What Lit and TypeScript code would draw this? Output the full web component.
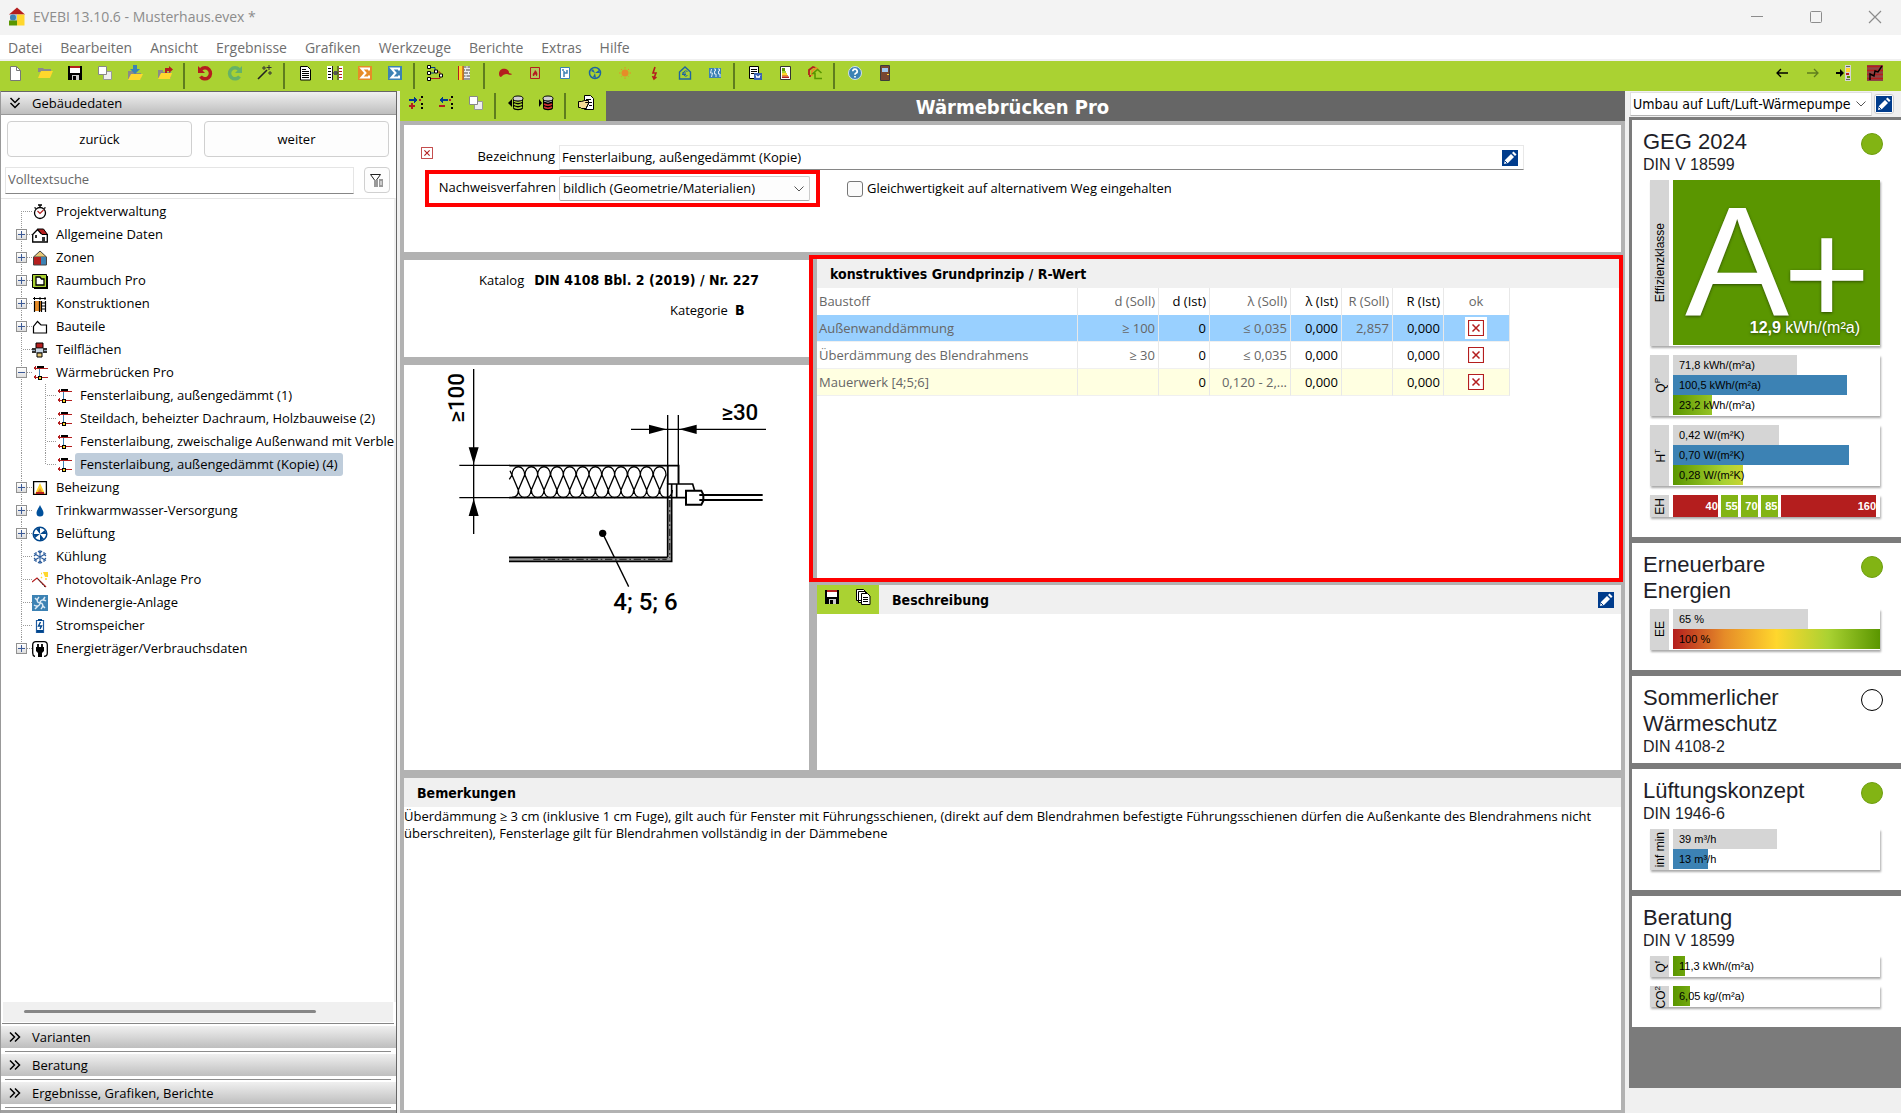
import { LitElement, html, css, svg, nothing, TemplateResult } from 'lit';
import { customElement, property } from 'lit/decorators.js';
import { classMap } from 'lit/directives/class-map.js';
import { styleMap } from 'lit/directives/style-map.js';

const RED = '#b41e1e';
const NAVY = '#003c8c';
const BLUE = '#3c82b4';
const YELLOW = '#ffd72d';
const ORANGE = '#e68c28';

const bridge = svg`<g shape-rendering="crispEdges"><path d="M5 1h7v3h-2v-1h-3v1h-2z" fill="#000"/><path d="M2 3h14M2 12h14" stroke="${RED}" stroke-width="1"/><path d="M1 3l3-2v4zM1 12l3-2v4z" fill="${RED}"/><path d="M7.500 4v7" stroke="${BLUE}"/><path d="M6 11h4v4h-4z" fill="#000"/><path d="M7 12h2v2h-2z" fill="${YELLOW}"/></g>`;

const ICONS: Record<string, TemplateResult | unknown> = {
  app: svg`<path d="M0 7L8 0l8 7z" fill="${RED}"/><path d="M1 7h8v7H1z" fill="#a9c4da"/><circle cx="4" cy="10" r="3" fill="${BLUE}"/><path d="M8 7h7.500v11H8z" fill="${YELLOW}"/><path d="M0 13h8v5H0z" fill="#5a9600"/>`,
  file: svg`<path d="M3.500 1.500h6l4 4v10h-10z" fill="#fff" stroke="#777"/><path d="M9.500 1.500v4h4" fill="none" stroke="#777"/>`,
  open: svg`<path d="M1 3h5l1 1h7v3H1z" fill="#8a8a8a"/><path d="M4 6h12l-3 7H1z" fill="${YELLOW}"/>`,
  save: svg`<path d="M1 1h14v14H1z" fill="#000"/><path d="M3 3h10v5H3z" fill="#fff"/><path d="M3 1h10v2H3z" fill="${RED}"/><path d="M5 10h7v5H5z" fill="#ccc"/><path d="M6 11h3v4H6z" fill="#000"/>`,
  copies: svg`<path d="M6.500 6.500h8v8h-8z" fill="#eee" stroke="#999"/><path d="M1.500 1.500h8v8h-8z" fill="#fff" stroke="#888"/>`,
  importf: svg`<path d="M1 6h6v2h7v6H1z" fill="#8a8a8a"/><path d="M4 9h12l-3 6H1z" fill="${YELLOW}"/><path d="M6 0h4v4h3l-5 5-5-5h3z" fill="${BLUE}"/>`,
  exportf: svg`<path d="M1 5h5v2h8v6H1z" fill="#8a8a8a"/><path d="M4 8h11l-2 6H1z" fill="${YELLOW}"/><path d="M8 8V3h4V1l4 3.500L12 8V6h-2v2z" fill="${RED}"/>`,
  undo: svg`<path d="M4 4.500a5.500 5.500 0 1 1-.5 7" fill="none" stroke="${RED}" stroke-width="3.500"/><path d="M1 1v7h7z" fill="${RED}"/>`,
  redo: svg`<path d="M12 4.500a5.500 5.500 0 1 0 .5 7" fill="none" stroke="#66b266" stroke-width="3.500"/><path d="M15 1v7H8z" fill="#66b266"/>`,
  wand: svg`<path d="M1 14L10 5" stroke="#222" stroke-width="1.600"/><path d="M7 1v4M5 3h4M12 0v5M9.500 2.500h5M13 6v4M11 8h4" stroke="#333"/>`,
  doc: svg`<path d="M3.500 1.500h7l3 3v10.500h-10z" fill="#fff" stroke="#000"/><path d="M5 4.500h4M5 6.500h7M5 8.500h7M5 10.500h7M5 12.500h7" stroke="#000"/>`,
  compare: svg`<path d="M0 1h5v14H0zM12 1h4v14h-4z" fill="#fff"/><path d="M1 3.500h3M1 6.500h3M1 9.500h3M1 12.500h3" stroke="#000"/><path d="M12 3.500h3M12 6.500h3M12 9.500h3M12 12.500h3" stroke="${RED}"/><path d="M5.500 1v14M11 1v14M6 8h5" stroke="#222"/><path d="M7 6h3v4H7z" fill="#555"/>`,
  sumo: svg`<path d="M1 1h14v14H1z" fill="${ORANGE}"/><path d="M12 5.500V3.500H4.500L8.500 8l-4 4.500H12v-2" fill="none" stroke="#fff" stroke-width="2"/>`,
  sumb: svg`<path d="M1 1h14v14H1z" fill="${BLUE}"/><path d="M12 5.500V3.500H4.500L8.500 8l-4 4.500H12v-2" fill="none" stroke="#fff" stroke-width="2"/>`,
  nodes: svg`<path d="M3 2.500h5v4M3 8h4" fill="none" stroke="${NAVY}"/><path d="M3 13.500h10v-4M8 7h5v2" fill="none" stroke="${RED}"/><g fill="#fff" stroke="#000"><path d="M.5.5h3v3h-3zM.5 6.500h3v3h-3zM.5 12.500h3v3h-3zM7.500 5h3v3h-3zM12.500 9h3v3h-3z"/></g>`,
  wall: svg`<path d="M2 1h4v14H2z" fill="${YELLOW}"/><path d="M1.500 1v14M6 1v14" stroke="${RED}"/><path d="M7 1h6v14H7z" fill="#999"/><path d="M7 3.500h6M7 6.500h6M7 9.500h6M7 12.500h6M10 1v3M8.500 4v3M11.500 7v3M9 10v3" stroke="#eee"/>`,
  cap: svg`<path d="M2 9C2 4 6 3 9 4c3 1 3 3 3 4l3 1c0 1-3 1-5 0-3 0-4 1-6 3-1 0-2-1-2-3z" fill="${RED}"/>`,
  flame: svg`<path d="M3.500 2.500h9v11h-9z" fill="#b4c85a" stroke="${RED}"/><path d="M8 5c2 2 3 3 2 6H9.200c0-2-2-2-2 0H6C5 8 7.500 8 8 5z" fill="${RED}"/>`,
  tap: svg`<path d="M3.500 2.500h9v11h-9z" fill="#fff" stroke="${BLUE}"/><path d="M7 12V6M7 8h3V5M6 4v2" fill="none" stroke="${BLUE}" stroke-width="1.500"/>`,
  fan: svg`<circle cx="8" cy="8" r="5.500" fill="none" stroke="#1e64a0" stroke-width="1.500"/><path d="M8 8L4 6l2-2zM8 8l4-3 1 3zM8 8l1 5-3-1z" fill="#1e64a0"/>`,
  sun: svg`<circle cx="8" cy="8" r="3.500" fill="${ORANGE}"/><path d="M8 2v12M2 8h12M4 4l8 8M12 4l-8 8" stroke="${ORANGE}" stroke-dasharray="1.500 2"/>`,
  bolt: svg`<path d="M8 2L6 8h3l-2 5M5.500 11l1.500 3 2.500-2" fill="none" stroke="${RED}" stroke-width="1.600"/>`,
  euro: svg`<path d="M2.500 7L8 2l5.500 5v7h-11z" fill="none" stroke="#1e64a0" stroke-width="1.400"/><path d="M10.500 6.500a2.600 2.600 0 1 0 0 4M5 8h4M5 9.500h4" fill="none" stroke="#1e64a0"/>`,
  grid: svg`<path d="M2 3h12v10H2z" fill="${BLUE}"/><path d="M4.500 4l-1 4h2l-1 4M7 4h1.500v2H7.500v3H9v3M11 4h1.500v2h-1v3H13v3" fill="none" stroke="#dceaf5"/>`,
  word: svg`<path d="M2.500 1.500h9v12h-9z" fill="#fff" stroke="#000"/><path d="M4 4.500h6M4 6.500h6M4 8.500h4" stroke="#000"/><path d="M7 8h8v7H7z" fill="#3c64b4"/><path d="M9 10l1 3 1-2 1 2 1-3" fill="none" stroke="#fff"/>`,
  label: svg`<path d="M3.500 1.500h10v13h-10z" fill="#fff" stroke="#333"/><path d="M5 3h3v3H5z" fill="#5a9600"/><path d="M5 6h4v2H5z" fill="#aad232"/><path d="M5 8h5v2H5z" fill="${YELLOW}"/><path d="M5 10h6v1.500H5z" fill="${ORANGE}"/><path d="M5 11.500h7V13H5z" fill="${RED}"/>`,
  houses: svg`<path d="M2 10V5l4-3 3 1M3 10v2" fill="none" stroke="${RED}" stroke-width="1.800"/><path d="M5 11V6l4-3 3 2" fill="none" stroke="${ORANGE}" stroke-width="1.800"/><path d="M14.500 8L10.500 4.500 6 8.500H8v5h7" fill="none" stroke="#5a9600" stroke-width="1.600"/>`,
  help: svg`<circle cx="8" cy="8" r="6.500" fill="${BLUE}" stroke="#cfe0ee"/><path d="M5.800 6.300a2.200 2.200 0 1 1 3 2q-.8.400-.8 1.400M8 11v1.600" fill="none" stroke="#fff" stroke-width="1.700"/>`,
  door: svg`<path d="M3 1h10v14H3z" fill="#784632"/><path d="M3.500.5h9v15h-9z" fill="none" stroke="#3c3c3c"/><path d="M5 3h6v4H5z" fill="#a0c8f0"/><path d="M10 9h2v1h-2z" fill="${YELLOW}"/>`,
  back: svg`<path d="M14 8H3M7 4L3 8l4 4" fill="none" stroke="#000" stroke-width="1.300"/>`,
  fwd: svg`<path d="M2 8h11M9 4l4 4-4 4" fill="none" stroke="#5f7d1e" stroke-width="1.300"/>`,
  dock: svg`<path d="M0 7h4V4l4 4-4 4V9H0z" fill="#000"/><path d="M9 0h6v16H9z" fill="#d5d5d5"/><path d="M10 3h4v4h-4z" fill="${YELLOW}"/><path d="M10 8h3v2h-3z" fill="${RED}"/><path d="M11 11h3v2h-3z" fill="#5a9600"/><path d="M10 1.500h4M10 14.500h4" stroke="#666"/>`,
  chart: svg`<path d="M0 0h16v16H0z" fill="#8c4646"/><path d="M0 1.500h16M0 5.500h16M0 9.500h16M0 13.500h16" stroke="${RED}" stroke-width="1.500"/><path d="M3 15V9l4 2 1-5 3 1 4-6" fill="none" stroke="#000" stroke-width="1.400"/>`,
  addrow: svg`<g shape-rendering="crispEdges"><path d="M1 4h6v2H1z" fill="${NAVY}"/><path d="M6 2l4 3-4 3z" fill="${NAVY}"/><path d="M11 4h2v2h-2z" fill="${RED}"/><path d="M13 1h2v2h-2zM13 8h2v2h-2zM13 12h2v2h-2z" fill="#000"/><path d="M1 10h6v2H1zM3 8h2v6H3z" fill="${RED}"/></g>`,
  delrow: svg`<g shape-rendering="crispEdges"><path d="M4 4h6v2H4z" fill="${NAVY}"/><path d="M5 2L1 5l4 3z" fill="${NAVY}"/><path d="M11 4h2v2h-2z" fill="${RED}"/><path d="M13 1h2v2h-2zM13 8h2v2h-2zM13 12h2v2h-2z" fill="#000"/><path d="M1 10h6v2H1z" fill="${RED}"/></g>`,
  dbout: svg`<path d="M0 8l4-4v8z" fill="#000"/><path d="M5 3v10c0 3 10 3 10 0V3z" fill="#000"/><path d="M6 6q4 2.500 8 0M6 9q4 2.500 8 0M6 12q4 2.500 8 0" fill="none" stroke="#aad232" stroke-width="1.500"/><ellipse cx="10" cy="3.500" rx="5" ry="2.500" fill="#d0d0d0" stroke="#000"/>`,
  dbin: svg`<path d="M4 8L1 4v8z" fill="#000"/><path d="M5 3v10c0 3 10 3 10 0V3z" fill="#000"/><path d="M6 9q4 2.500 8 0M6 12q4 2.500 8 0" fill="none" stroke="#d23232" stroke-width="1.500"/><path d="M6 6q4 2.500 8 0" fill="none" stroke="#ccc"/><ellipse cx="10" cy="3.500" rx="5" ry="2.500" fill="#d0d0d0" stroke="#000"/>`,
  hand: svg`<path d="M6.500.5h6l3 3v11h-9z" fill="#fff" stroke="#000"/><path d="M8 4.500h5M11 7.500h3M11 10.500h3" stroke="#000"/><path d="M.5 6.500h3l3-1h4v2h-3 3v2h-1v2h-1v2h-5l-1-1h-2z" fill="#f5dc96" stroke="#000"/>`,
  pencil: svg`<path d="M0 0h16v16H0z" fill="${NAVY}"/><path d="M2 14l1-4 6-6 3 3-6 6z" fill="#fff"/><path d="M10 3l1.500-1.500 3 3L13 6z" fill="#fff"/><path d="M3 11l2 2" stroke="${NAVY}"/>`,
  cross: svg`<path d="M.5.5h15v15H.5z" fill="#fff" stroke="${RED}" stroke-width="1.200"/><path d="M4.500 4.500l7 7M11.500 4.500l-7 7" stroke="${RED}" stroke-width="1.500"/>`,
  filter: svg`<path d="M1.500 2.500h10L7.500 8v5l-2-1.500V8z" fill="#fff" stroke="#222"/><path d="M5 8h4v7H5zM10 7h4v8h-4z" fill="#999"/><path d="M12 9v4" stroke="#fff"/>`,
  copydocs: svg`<path d="M1.500.5h7l2 2v9h-9zM3.500 2.500h7l2 2v9h-9z" fill="#fff" stroke="#000"/><path d="M6.500 4.500h6l2.500 2.500v8.500H6.500z" fill="#fff" stroke="#000"/><path d="M8 8.500h5M8 10.500h5M8 12.500h5" stroke="#000"/>`,
  watch: svg`<circle cx="8" cy="9" r="5.500" fill="#fff" stroke="#000" stroke-width="1.300"/><path d="M6 1h4M8 1v3M2.500 3.500l1.500 1M13.500 3.500l-1.500 1" stroke="#000" stroke-width="1.400"/><path d="M5.500 7l2.500 2.500L11.500 6" fill="none" stroke="${RED}" stroke-width="1.200"/>`,
  house: svg`<path d="M.7 15V7.500L5.500 2.500 9 6.500 15.300 7.500V15z" fill="#fff" stroke="#000" stroke-width="1.300"/><path d="M5.500 2h6l4 5.500H10z" fill="${RED}" stroke="#000"/><path d="M3 8h2v3H3zM10 10h3v5h-3z" fill="#333"/>`,
  zones: svg`<path d="M1.500 7L8 1l6.500 6z" fill="#e6c878" stroke="#444"/><path d="M2 7h7v8H2z" fill="${RED}"/><path d="M9 7h5v8H9z" fill="${BLUE}"/><path d="M1.500 7v8h13V7" fill="none" stroke="#444"/>`,
  room: svg`<path d="M.5 1.500h14v13H.5z" fill="#aad232" stroke="#000"/><path d="M15 3v12.500H2" fill="none" stroke="#000" stroke-width="2"/><path d="M4 4h4l1.500 2H12v6H4z" fill="#fff" stroke="#000" stroke-width="1.300"/>`,
  constr: svg`<path d="M1 2.500h13M2.500 1v3M8 1v3M13 1v3" stroke="#000"/><path d="M3 5h6v10H3z" fill="${ORANGE}"/><path d="M2.500 5v11M9.500 5v11M13.500 5v11M7.500 5v11" stroke="#000" stroke-width="1.200"/><path d="M9.500 7h4M9.500 10h4M9.500 13h4" stroke="#000"/>`,
  part: svg`<path d="M1.500 14V7.500L5.500 2.500 9 6h5.500v8z" fill="#fff" stroke="#000" stroke-width="1.200"/>`,
  faces: svg`<path d="M4 1h7v5H4z" fill="${RED}" stroke="#000"/><path d="M0 6h15v5H0z" fill="#333"/><path d="M4 6.500h7v4H4z" fill="#c8d7e6"/><path d="M0 8.500h3M12 8.500h3" stroke="#9ab"/><path d="M5 11h5v4H5z" fill="#e6c878" stroke="#000"/>`,
  bridge,
  heat: svg`<path d="M1.600 1.600h12.800v12.800H1.600z" fill="#fff" stroke="#000" stroke-width="1.300"/><path d="M8 3l5 11H3z" fill="${YELLOW}"/><path d="M8 8l3.500 6h-7z" fill="${ORANGE}"/><path d="M4 12h8v2H4z" fill="${RED}"/>`,
  drop: svg`<path d="M8 2c1 3 3.500 5 3.500 8a3.500 3.500 0 0 1-7 0C4.500 7 7 5 8 2z" fill="#00509b"/>`,
  vent: svg`<circle cx="8" cy="8" r="6.800" fill="#fff" stroke="#00468c" stroke-width="1.500"/><path d="M8 8L4 3l4-1.500zM8 8l5-4 1.500 4zM8 8l4 5-4 1.500zM8 8l-5 4L1.500 8z" fill="#00468c"/>`,
  snow: svg`<path d="M8 1v14M2 4.500l12 7M14 4.500l-12 7M6 2l2 2 2-2M6 14l2-2 2 2M2 7l2-2V3M14 7l-2-2V3M2 9l2 2v2M14 9l-2 2v2" fill="none" stroke="#285a9b" stroke-width="1.100"/>`,
  pv: svg`<path d="M0 10l5-4 9 9" fill="none" stroke="${RED}" stroke-width="1.200"/><path d="M6 7l7 8" stroke="#333" stroke-dasharray="2 1"/><path d="M11 0h5v5h-3z" fill="${YELLOW}"/><path d="M9 1.500h1M10 5l-1 1M14 6v2" stroke="${YELLOW}" stroke-width="1.500"/>`,
  wind: svg`<path d="M0 0h16v16H0z" fill="${BLUE}"/><path d="M8 8C5 8 4 5 7 2M8 8c0-3 3-4 6-2M8 8c3 0 4 3 1 6M8 8c0 3-3 4-6 2M3 3l2 2M13 13l-2-2M3 14l3-3M13 2l-2 3" fill="none" stroke="#dceaf5" stroke-width="1.500"/>`,
  battery: svg`<path d="M4.500 2.500h7v12h-7z" fill="#fff" stroke="#1e5aa0" stroke-width="1.200"/><path d="M6 1h4v2H6zM5 12h6v2.500H5z" fill="#00468c"/><path d="M8.500 4L6.500 8h3L8 11" fill="none" stroke="#00468c" stroke-width="1.400"/>`,
  plug: svg`<path d="M3 15.500Q.7 15 .7 12V4Q.7.7 4 .7h8q3.300 0 3.300 3.300v8q0 3.300-3.300 3.300" fill="#fff" stroke="#000" stroke-width="1.300"/><path d="M4 6h8v4l-2 2v4H6v-4L4 10z" fill="#000"/><path d="M6 3v3M10 3v3" stroke="#000" stroke-width="1.800"/>`,
  down2: svg`<path d="M3.500 3l4.500 4.500L12.500 3M3.500 8l4.500 4.500L12.500 8" fill="none" stroke="#000" stroke-width="1.500"/>`,
  right2: svg`<path d="M3 3.500L7.500 8 3 12.500M8 3.500L12.500 8 8 12.500" fill="none" stroke="#000" stroke-width="1.500"/>`,
  chevron: svg`<path d="M3.500 5.500L8 10l4.500-4.500" fill="none" stroke="#555"/>`,
  min: svg`<path d="M2 7.500h12" stroke="#8c8c8c"/>`,
  max: svg`<rect x="2.500" y="2.500" width="11" height="11" rx="1" fill="none" stroke="#8c8c8c"/>`,
  close: svg`<path d="M2 2l12 12M14 2L2 14" stroke="#8c8c8c" stroke-width="1.200"/>`,
};

const icon = (name: string, size = 16) =>
  html`<svg class="icon" width=${size} height=${size} viewBox="0 0 16 16" aria-hidden="true">${ICONS[name]}</svg>`;

const shared = css`
  *, *::before, *::after { box-sizing: border-box; }
  button, input, select { font: inherit; color: inherit; margin: 0; }
  .icon { display: block; flex: none; }
  .tool { border: 0; padding: 0; background: none; width: 16px; height: 16px; flex: none; }
  .tools { display: flex; }
  .group { display: flex; gap: 14px; margin-right: 12px; padding: 2px 10px 0 0; border-right: 2px solid #5f7d1e; }
  .group:last-child { border-color: transparent; }
`;

const toolbar = (groups: [string, string][][]) => html`<div class="tools">${groups.map(g =>
  html`<div class="group">${g.map(([i, t]) => html`<button class="tool" title=${t}>${icon(i)}</button>`)}</div>`)}</div>`;

/* ---------- Navigation tree ---------- */

interface Node { icon: string; label: string; box?: '+' | '-'; children?: string[]; }

const TREE: Node[] = [
  { icon: 'watch', label: 'Projektverwaltung' },
  { icon: 'house', label: 'Allgemeine Daten', box: '+' },
  { icon: 'zones', label: 'Zonen', box: '+' },
  { icon: 'room', label: 'Raumbuch Pro', box: '+' },
  { icon: 'constr', label: 'Konstruktionen', box: '+' },
  { icon: 'part', label: 'Bauteile', box: '+' },
  { icon: 'faces', label: 'Teilflächen' },
  {
    icon: 'bridge', label: 'Wärmebrücken Pro', box: '-', children: [
      'Fensterlaibung, außengedämmt (1)',
      'Steildach, beheizter Dachraum, Holzbauweise (2)',
      'Fensterlaibung, zweischalige Außenwand mit Verblendmauerwerk (3)',
      'Fensterlaibung, außengedämmt (Kopie) (4)',
    ],
  },
  { icon: 'heat', label: 'Beheizung', box: '+' },
  { icon: 'drop', label: 'Trinkwarmwasser-Versorgung', box: '+' },
  { icon: 'vent', label: 'Belüftung', box: '+' },
  { icon: 'snow', label: 'Kühlung' },
  { icon: 'pv', label: 'Photovoltaik-Anlage Pro' },
  { icon: 'wind', label: 'Windenergie-Anlage' },
  { icon: 'battery', label: 'Stromspeicher' },
  { icon: 'plug', label: 'Energieträger/Verbrauchsdaten', box: '+' },
];

@customElement('nav-panel')
export class NavPanel extends LitElement {
  static styles = [shared, css`
    :host { display: flex; flex-direction: column; min-width: 0; background: #fff; border-right: 1px solid #666; border-left: 1px solid #999; }
    .head { display: flex; align-items: center; gap: 9px; width: 100%; height: 22px; padding: 0 6px; border: 0; text-align: left;
      background: linear-gradient(#f0f0f0, #bebebe); flex: none; }
    .head.top { height: 24px; border-top: 1px solid #666; border-bottom: 1px solid #999; }
    .fold { display: flex; flex-direction: column; gap: 2px; flex: none; padding: 2px 0; }
    .rule { height: 1px; margin: 1px 5px 0 4px; background: #8c8c8c; }
    .nav { display: grid; grid-template-columns: 1fr 1fr; gap: 12px; padding: 6px 7px 10px 6px; }
    .btn { height: 36px; border: 1px solid #d0d0d0; border-radius: 4px; background: #fdfdfd; }
    .search { display: flex; gap: 10px; padding: 0 6px 4px 4px; }
    .search input { flex: 1; min-width: 0; height: 27px; border: 1px solid #e5e5e5; border-bottom-color: #868686; background: #fff; padding: 0 2px 3px; outline: 0; }
    .search input::placeholder { color: #666; opacity: 1; }
    .filter { width: 26px; height: 26px; display: grid; place-items: center; padding: 0; border: 1px solid #d0d0d0; border-radius: 4px; background: #fdfdfd; }
    .tree { flex: 1; overflow: hidden; border-top: 1px solid #e5e5e5; border-right: 2px solid #f0f0f0; padding-top: 1px; white-space: nowrap; }
    ul { list-style: none; margin: 0; padding: 0; }
    .row { display: flex; align-items: center; height: 23px; padding-left: 15px; }
    .guide { --dots: #999 0 1px, #fff 1px 2px; flex: none; width: 16px; height: 23px; display: flex; align-items: center;
      background: repeating-linear-gradient(var(--dots)) 5px 0 / 1px 100% no-repeat,
        repeating-linear-gradient(90deg, var(--dots)) 5px 11px / 11px 1px no-repeat; }
    .guide.line { background: repeating-linear-gradient(var(--dots)) 5px 0 / 1px 100% no-repeat; width: 24px; }
    .first .guide { background-position: 5px 11px, 5px 11px; }
    .guide.end { background-size: 1px 12px, 11px 1px; }
    .box { width: 11px; height: 11px; padding: 0; border: 1px solid #919191; background: linear-gradient(#fff, #ddd); }
    .box svg { display: block; }
    .label { height: 23px; border: 0; border-radius: 3px; padding: 0 5px; margin-left: 3px; background: none; }
    .label.on { background: #bfcddb; }
    .scroll { height: 21px; margin: 0 3px 0 2px; padding: 8px 0 0 21px; background: #f0f0f0; border-bottom: 1px solid #fff; flex: none; }
    .thumb { width: 79%; height: 3px; border-radius: 2px; background: #868686; }
    .end-rule { height: 1px; background: #868686; margin: 0 2px 0 1px; flex: none; }
    .base { height: 3px; background: #a0a0a0; flex: none; }
  `];

  private box(sign: string) {
    return html`<button class="box" aria-label=${sign === '+' ? 'Aufklappen' : 'Zuklappen'}><svg width="9" height="9" viewBox="0 0 9 9"><path d=${sign === '+' ? 'M1 4.500h7M4.500 1v7' : 'M1 4.500h7'} stroke="#3c5a96"/></svg></button>`;
  }

  render() {
    return html`
      <button class="head top">${icon('down2')}Gebäudedaten</button>
      <div class="nav"><button class="btn">zurück</button><button class="btn">weiter</button></div>
      <div class="search">
        <input type="search" placeholder="Volltextsuche" aria-label="Volltextsuche">
        <button class="filter" title="Filter">${icon('filter')}</button>
      </div>
      <div class="tree">
        <ul>${TREE.map((n, i) => html`
          <li>
            <div class=${classMap({ row: true, first: i === 0 })}>
              <span class=${classMap({ guide: true, end: i === TREE.length - 1 })}>${n.box ? this.box(n.box) : nothing}</span>
              ${icon(n.icon)}<button class="label">${n.label}</button>
            </div>
            ${n.children ? html`<ul>${n.children.map((c, k) => html`
              <li class="row">
                <span class="guide line"></span>
                <span class=${classMap({ guide: true, end: k === n.children!.length - 1 })}></span>
                ${icon('bridge')}<button class=${classMap({ label: true, on: k === 3 })}>${c}</button>
              </li>`)}</ul>` : nothing}
          </li>`)}</ul>
      </div>
      <div class="scroll"><div class="thumb"></div></div>
      <div class="end-rule"></div>
      <div class="fold">
        ${['Varianten', 'Beratung', 'Ergebnisse, Grafiken, Berichte'].map(t => html`
          <button class="head">${icon('right2')}${t}</button><div class="rule"></div>`)}
      </div>
      <div class="base"></div>`;
  }
}

/* ---------- Key figures ---------- */

interface Bar { text: string; width: number; tone: string; }

@customElement('figure-chart')
export class FigureChart extends LitElement {
  @property() label = '';
  @property() small = '';
  @property({ attribute: false }) bars: Bar[] = [];
  static styles = [shared, css`
    :host { display: grid; grid-template-columns: 19px 1fr; column-gap: 4px; box-shadow: 1px 2px 2px #aaa; background: #fff; }
    .label { background: #d5d5d5; display: grid; place-items: center; font-size: 12px; contain: size; }
    .label span { writing-mode: vertical-rl; transform: rotate(180deg); white-space: nowrap; line-height: 16px; }
    small { font-size: 8px; vertical-align: 3px; }
    .body { padding-bottom: 1px; min-width: 0; }
    .bar { display: grid; height: 20px; align-items: center; font-size: 11px; }
    .fill { grid-area: 1 / 1; height: 100%; }
    .text { grid-area: 1 / 1; padding-left: 6px; white-space: nowrap; }
    .grey { background: #d5d5d5; }
    .blue { background: #3c82b4; }
    .good { background-image: linear-gradient(90deg, #5a9600, #aad232 25%, #ffd72d 50%, #e68c28 75%, #b41e1e); }
    .rise { background-image: linear-gradient(90deg, #b41e1e, #e68c28 25%, #ffd72d 50%, #aad232 75%, #5a9600); }
  `];
  render() {
    return html`
      <div class="label"><span>${this.label}${this.small ? html`<small>${this.small}</small>` : nothing}</span></div>
      <div class="body"><slot>${this.bars.map(b => html`
        <div class="bar">
          <div class="fill ${b.tone}" style=${styleMap({ width: `${b.width}%`, backgroundSize: `${10000 / b.width}% 100%` })}></div>
          <span class="text">${b.text}</span>
        </div>`)}</slot></div>`;
  }
}

@customElement('key-figures')
export class KeyFigures extends LitElement {
  static styles = [shared, css`
    :host { display: block; background: #f0f0f0; border-left: 4px solid #f0f0f0; min-width: 0; }
    .pick { display: flex; align-items: center; gap: 2px; padding: 1px 7px 1px 1px; }
    .combo { flex: 1; min-width: 0; display: grid; align-items: center; height: 24px; background: #fff; border: 1px solid #e0e0e0; border-bottom-color: #b4b4b4; }
    .combo select { grid-area: 1 / 1; appearance: none; border: 0; background: none; width: 100%; padding: 0 20px 0 2px; font: 14px/20px "DejaVu Sans Condensed", "Noto Sans", sans-serif; outline: 0; }
    .combo .icon { grid-area: 1 / 1; justify-self: end; margin-right: 2px; pointer-events: none; }
    .edit { width: 20px; height: 20px; padding: 1px; border: 1px solid #ccc; border-radius: 3px; background: #fff; }
    .stack { font-family: "Liberation Sans", Arial, sans-serif; background: #7b7b7b; padding: 3px 0 61px 3px; display: flex; flex-direction: column; gap: 6px; color: #1e1e28; }
    .card { background: #fff; padding: 9px 21px 6px 11px; }
    .card.wide { padding-bottom: 20px; }
    .title { display: flex; justify-content: space-between; align-items: flex-start; }
    h2 { font-size: 22px; line-height: 26px; font-weight: 400; margin: 0; max-width: 170px; }
    p { font-size: 16px; line-height: 20px; margin: 0; }
    .lamp { width: 22px; height: 22px; border-radius: 50%; background: #82b414; border: 1px solid #6e9e10; margin: 4px -3px 0 0; flex: none; }
    .lamp.off { background: #fff; border-color: #000; }
    .charts { display: flex; flex-direction: column; gap: 9px; margin: 5px 0 0 7px; color: #000; }
    .grade { background: #5a9600; color: #fff; height: 165px; display: grid; text-shadow: 0 1px 3px #2d4b00; }
    .letter { grid-area: 1 / 1; font-size: 156px; line-height: 162px; padding-left: 12px; white-space: nowrap; }
    .letter sub { font-size: 150px; line-height: 0; vertical-align: -10px; margin-left: -6px; }
    .value { grid-area: 1 / 1; align-self: end; justify-self: end; font-size: 16px; line-height: 18px; padding: 0 20px 8px 0; }
    .eh { display: grid; grid-template-columns: 45fr 17fr 17fr 17fr 96fr; gap: 3px; padding-right: 4px; height: 21px; color: #fff; font: bold 11px/22px "Liberation Sans", Arial, sans-serif; text-align: right; }
    .ok { background: #82b414; }
    .no { background: #b41e1e; }
  `];

  private card(title: string, sub: string, lamp: string, charts: unknown = nothing) {
    return html`<section class=${classMap({ card: true, wide: charts !== nothing })}>
      <div class="title"><h2>${title}</h2>${lamp ? html`<span class="lamp ${lamp}"></span>` : nothing}</div>
      ${sub ? html`<p>${sub}</p>` : nothing}
      ${charts === nothing ? nothing : html`<div class="charts">${charts}</div>`}
    </section>`;
  }

  render() {
    return html`
      <div class="pick">
        <div class="combo"><select aria-label="Variante"><option>Umbau auf Luft/Luft-Wärmepumpe</option></select>${icon('chevron')}</div>
        <button class="edit" title="Variante bearbeiten">${icon('pencil')}</button>
      </div>
      <div class="stack">
        ${this.card('GEG 2024', 'DIN V 18599', 'on', html`
          <figure-chart label="Effizienzklasse">
            <div class="grade"><div class="letter">A<sub>+</sub></div><div class="value"><b>12,9</b> kWh/(m²a)</div></div>
          </figure-chart>
          <figure-chart label="Q" small="P" .bars=${[
            { text: '71,8 kWh/(m²a)', width: 60, tone: 'grey' },
            { text: '100,5 kWh/(m²a)', width: 84, tone: 'blue' },
            { text: '23,2 kWh/(m²a)', width: 19, tone: 'good' }]}></figure-chart>
          <figure-chart label="H" small="T" .bars=${[
            { text: '0,42 W/(m²K)', width: 51, tone: 'grey' },
            { text: '0,70 W/(m²K)', width: 85, tone: 'blue' },
            { text: '0,28 W/(m²K)', width: 34, tone: 'good' }]}></figure-chart>
          <figure-chart label="EH">
            <div class="eh"><span class="no">40</span><span class="ok">55</span><span class="ok">70</span><span class="ok">85</span><span class="no">160</span></div>
          </figure-chart>`)}
        ${this.card('Erneuerbare Energien', '', 'on', html`
          <figure-chart label="EE" .bars=${[
            { text: '65 %', width: 65, tone: 'grey' },
            { text: '100 %', width: 100, tone: 'rise' }]}></figure-chart>`)}
        ${this.card('Sommerlicher Wärmeschutz', 'DIN 4108-2', 'off')}
        ${this.card('Lüftungskonzept', 'DIN 1946-6', 'on', html`
          <figure-chart label="inf min" .bars=${[
            { text: '39 m³/h', width: 50, tone: 'grey' },
            { text: '13 m³/h', width: 17, tone: 'blue' }]}></figure-chart>`)}
        ${this.card('Beratung', 'DIN V 18599', '', html`
          <figure-chart label="Q" small="f" .bars=${[{ text: '11,3 kWh/(m²a)', width: 6, tone: 'good' }]}></figure-chart>
          <figure-chart label="CO" small="2" .bars=${[{ text: '6,05 kg/(m²a)', width: 8, tone: 'good' }]}></figure-chart>`)}
      </div>`;
  }
}

/* ---------- Detail drawing of the window reveal ---------- */

const coils = 'M330 362L336 375L328 388M336 442Q355 442 355 420' + Array.from({ length: 12 }, (_, i) => {
  const x = 355 + Math.round(i * 38.5);
  return `M${x - 19} 375C${x - 19} 342 ${x + 19} 342 ${x + 19} 375L${x} 420M${x - 19} 375L${x} 420C${x} 450 ${x + 38} 450 ${x + 38} 420`;
}).join('');

const drawing = html`<svg class="drawing" width="405" height="404" viewBox="12 45 1215 1212" role="img" aria-label="Detail Fensterlaibung">
  <g fill="none" stroke="#000" stroke-width="4">
    <path d="M221 57V552M178 346H330M178 443H330M693 238H1098M803 195V400M835 195V400"/>
    <path d=${coils} stroke-width="4"/>
    <path d="M328 347H836V402M328 443H856M803 402V346M830 402V443" stroke-width="5"/>
    <path d="M608 550L686 710"/>
    <path d="M809 450V628H327" stroke="#999" stroke-width="8"/>
    <path d="M809 450V624M400 628H800" stroke="#333" stroke-dasharray="22 8 5 8"/>
    <path d="M803 622V402H878L884 422M815 402V634H327M803 622H327" stroke-width="5"/>
    <path d="M858 422H904L910 434V452L904 464H858Z" stroke-width="6"/>
    <path d="M898 435H1088M898 450H1088" stroke-width="6"/>
  </g>
  <path d="M221 342L206 292H236ZM221 446L206 498H236ZM799 238L747 224V252ZM838 238L890 224V252Z"/>
  <circle cx="608" cy="550" r="11"/>
  <g font-family="Roboto, sans-serif" font-weight="500">
    <text x="964" y="210" font-size="67">≥30</text>
    <text x="640" y="780" font-size="72">4; 5; 6</text>
    <text transform="translate(192 218) rotate(-90)" font-size="67">≥100</text>
  </g>
</svg>`;

/* ---------- Construction table ---------- */

const HEAD = ['Baustoff', 'd (Soll)', 'd (Ist)', 'λ (Soll)', 'λ (Ist)', 'R (Soll)', 'R (Ist)', 'ok'];
const ROWS = [
  ['Außenwanddämmung', '≥ 100', '0', '≤ 0,035', '0,000', '2,857', '0,000'],
  ['Überdämmung des Blendrahmens', '≥ 30', '0', '≤ 0,035', '0,000', '', '0,000'],
  ['Mauerwerk [4;5;6]', '', '0', '0,120 - 2,...', '0,000', '', '0,000'],
];

const MENU = ['Datei', 'Bearbeiten', 'Ansicht', 'Ergebnisse', 'Grafiken', 'Werkzeuge', 'Berichte', 'Extras', 'Hilfe'];

@customElement('app-root')
export class AppRoot extends LitElement {
  static styles = [shared, css`
    :host { display: grid; grid-template-rows: auto auto auto 1fr; min-height: 100vh; background: #f0f0f0; color: #000;
      font: 13px/17px "Open Sans", "Noto Sans", sans-serif; }
    .titlebar { display: flex; align-items: center; gap: 8px; height: 35px; padding: 0 18px 2px 9px; background: #f3f3f3; color: #8c8c8c; font: 14px/20px "Open Sans", "Noto Sans", sans-serif; }
    .titlebar h1 { font: inherit; margin: 0; flex: 1; }
    .wincontrols { display: flex; gap: 43px; }
    .menu { display: flex; gap: 18px; height: 26px; padding: 2px 8px 0; background: #fff; border-bottom: 2px solid #f0f0f0; }
    .menu a { font: 14px/22px "Open Sans", "Noto Sans", sans-serif; color: #6e6e6e; text-decoration: none; }
    .toolbar { display: flex; justify-content: space-between; height: 30px; padding: 2px 18px 2px 7px; background: #aad232; }
    .history { display: flex; gap: 15px; padding-top: 2px; }
    .body { display: grid; grid-template-columns: 397px minmax(0, 1fr) 276px; }
    .main { display: flex; flex-direction: column; min-width: 0; background: #b2b2b2; border-left: 3px solid #f0f0f0; }
    .band { display: flex; height: 30px; background: #666; flex: none; }
    .band .tools { padding: 2px 0 2px 8px; background: #aad232; }
    .band .group:last-child { margin-right: 0; }
    .band h2 { flex: 1; margin: 0; padding-right: 206px; text-align: center; color: #fff; font: bold 20px/32px "DejaVu Sans Condensed", "Noto Sans", sans-serif; }
    .panels { flex: 1; display: flex; flex-direction: column; gap: 8px; padding: 4px 4px 3px; }
    .panel { background: #fff; }
    .form { min-height: 127px; padding: 20px 17px 0; }
    .line { display: flex; }
    .line > label { text-align: right; }
    .name { padding-right: 80px; }
    .name .icon { margin-top: 2px; }
    .field .icon { margin-top: 0; }
    .name label { width: 122px; padding-top: 3px; margin-right: 4px; }
    .field { flex: 1; display: flex; align-items: center; height: 25px; border: 1px solid #e8e8e8; border-bottom-color: #868686; padding-right: 5px; }
    .field input { flex: 1; min-width: 0; border: 0; outline: 0; padding: 0 2px; background: none; }
    .mark { display: flex; align-items: center; gap: 3px; border: 4px solid #f00; margin-left: 4px; padding: 0 6px 0 0; height: 37px; width: 395px; }
    .mark label { width: 127px; text-align: right; padding-bottom: 3px; }
    .combo { flex: 1; display: grid; align-items: center; height: 25px; border: 1px solid #ccc; border-bottom-color: #aaa; border-radius: 2px; background: #fdfdfd; }
    .combo select { grid-area: 1 / 1; appearance: none; border: 0; outline: 0; background: none; padding: 0 20px 0 3px; width: 100%; }
    .combo .icon { grid-area: 1 / 1; justify-self: end; margin-right: 2px; pointer-events: none; }
    .check { display: flex; align-items: center; gap: 4px; margin-left: 27px; }
    .check input { appearance: none; width: 16px; height: 16px; border: 1px solid #777; border-radius: 3px; background: #fbfbfb; }
    .middle { display: grid; grid-template-columns: 405px minmax(0, 1fr); min-height: 510px; }
    .col { display: flex; flex-direction: column; gap: 8px; }
    .catalog { height: 97px; padding-top: 5px; }
    .catalog div { display: flex; gap: 10px; line-height: 30px; padding-left: 75px; }
    .catalog div + div { padding-left: 266px; gap: 7px; }
    b, h3 { font-family: "DejaVu Sans Condensed", "Noto Sans", sans-serif; font-size: 14px; font-weight: 700; }
    h3 { margin: 0; line-height: 29px; padding-top: 1px; }
    .plan { flex: 1; }
    .drawing { display: block; }
    .frame { height: 327px; margin: -5px -2px 0 0; border: 4px solid #f00; padding-left: 4px; }
    .frame > div { background: #fff; height: 100%; }
    .heading { display: flex; align-items: center; height: 29px; padding: 0 13px; background: #f0f0f0; }
    table { border-collapse: separate; border-spacing: 0; table-layout: fixed; width: 693px; }
    th { font-weight: 400; text-align: right; height: 27px; }
    td, th { padding: 0 3px 0 2px; border-right: 1px solid #e8e8e8; color: #666; white-space: nowrap; text-align: right; }
    td { height: 27px; border-bottom: 1px solid #f0f0f0; }
    th:first-child, td:first-child { text-align: left; }
    .ist { color: #000; }
    .sel td { background: #99d0ff; }
    .alt td { background: #ffffe1; }
    td.ok, th.ok { text-align: center; }
    .flag { display: grid; place-items: center; width: 22px; height: 22px; margin: 0 auto; background: #fff; }
    .alt .flag { background: none; }
    .about { flex: 1; margin: -5px 0 0 8px; }
    .about .heading { padding-left: 0; padding-right: 7px; gap: 13px; }
    .about h3 { flex: 1; }
    .swatch { display: flex; gap: 15px; height: 29px; width: 62px; padding: 4px 7px; background: #aad232; }
    .remarks { flex: 1; }
    .remarks p { margin: 0; padding-top: 1px; }
  `];

  render() {
    return html`
      <header class="titlebar">
        <svg width="16" height="20" viewBox="0 0 16 19" aria-hidden="true">${ICONS.app}</svg>
        <h1>EVEBI 13.10.6 - Musterhaus.evex *</h1>
        <div class="wincontrols">
          <button class="tool" title="Minimieren">${icon('min')}</button>
          <button class="tool" title="Maximieren">${icon('max')}</button>
          <button class="tool" title="Schließen">${icon('close')}</button>
        </div>
      </header>
      <nav class="menu">${MENU.map(m => html`<a href="#">${m}</a>`)}</nav>
      <div class="toolbar">
        ${toolbar([
          [['file', 'Neu'], ['open', 'Öffnen'], ['save', 'Speichern'], ['copies', 'Kopieren'], ['importf', 'Import'], ['exportf', 'Export']],
          [['undo', 'Rückgängig'], ['redo', 'Wiederholen'], ['wand', 'Assistent']],
          [['doc', 'Bericht'], ['compare', 'Vergleich'], ['sumo', 'Summe'], ['sumb', 'Bilanz']],
          [['nodes', 'Struktur'], ['wall', 'Bauteil']],
          [['cap', 'Berater'], ['flame', 'Heizung'], ['tap', 'Trinkwasser'], ['fan', 'Lüftung'], ['sun', 'Solar'], ['bolt', 'Strom'], ['euro', 'Kosten'], ['grid', 'Anlagen']],
          [['word', 'Word'], ['label', 'Energieausweis'], ['houses', 'Sanierungsfahrplan']],
          [['help', 'Hilfe'], ['door', 'Beenden']],
        ])}
        <div class="history">
          ${[['back', 'Zurück'], ['fwd', 'Vor'], ['dock', 'Andocken'], ['chart', 'Diagramm']].map(([i, t]) => html`<button class="tool" title=${t}>${icon(i)}</button>`)}
        </div>
      </div>
      <div class="body">
        <nav-panel></nav-panel>
        <main class="main">
          <div class="band">
            ${toolbar([
              [['addrow', 'Hinzufügen'], ['delrow', 'Entfernen'], ['copies', 'Kopieren']],
              [['dbout', 'Aus Datenbank'], ['dbin', 'In Datenbank']],
              [['hand', 'Übernehmen']],
            ])}
            <h2>Wärmebrücken Pro</h2>
          </div>
          <div class="panels">
            <section class="panel form">
              <div class="line name">
                ${icon('cross', 12)}
                <label for="name">Bezeichnung</label>
                <div class="field"><input id="name" type="text" .value=${'Fensterlaibung, außengedämmt (Kopie)'}><button class="tool" title="Bearbeiten">${icon('pencil')}</button></div>
              </div>
              <div class="line">
                <div class="mark">
                  <label for="proof">Nachweisverfahren</label>
                  <div class="combo"><select id="proof"><option>bildlich (Geometrie/Materialien)</option></select>${icon('chevron')}</div>
                </div>
                <div class="check"><input id="equal" type="checkbox"><label for="equal">Gleichwertigkeit auf alternativem Weg eingehalten</label></div>
              </div>
            </section>
            <div class="middle">
              <div class="col">
                <section class="panel catalog">
                  <div><span>Katalog</span><b>DIN 4108 Bbl. 2 (2019) / Nr. 227</b></div>
                  <div><span>Kategorie</span><b>B</b></div>
                </section>
                <section class="panel plan">${drawing}</section>
              </div>
              <div class="col">
                <section class="frame"><div>
                  <div class="heading"><h3>konstruktives Grundprinzip / R-Wert</h3></div>
                  <table>
                    <colgroup>${[261, 81, 51, 81, 51, 51, 51, 66].map(w => html`<col style=${styleMap({ width: `${w}px` })}>`)}</colgroup>
                    <thead><tr>${HEAD.map((h, i) => html`<th class=${classMap({ ist: h.includes('Ist'), ok: i === 7 })}>${h}</th>`)}</tr></thead>
                    <tbody>${ROWS.map((r, k) => html`<tr class=${classMap({ sel: k === 0, alt: k === 2 })}>
                      ${r.map((c, i) => html`<td class=${classMap({ ist: i > 0 && i % 2 === 0 })}>${c}</td>`)}
                      <td class="ok"><span class="flag">${icon('cross')}</span></td></tr>`)}</tbody>
                  </table>
                </div></section>
                <section class="panel about">
                  <div class="heading">
                    <div class="swatch"><button class="tool" title="Speichern">${icon('save')}</button><button class="tool" title="Kopieren">${icon('copydocs')}</button></div>
                    <h3>Beschreibung</h3>
                    <button class="tool" title="Bearbeiten">${icon('pencil')}</button>
                  </div>
                </section>
              </div>
            </div>
            <section class="panel remarks">
              <div class="heading"><h3>Bemerkungen</h3></div>
              <p>Überdämmung ≥ 3 cm (inklusive 1 cm Fuge), gilt auch für Fenster mit Führungsschienen, (direkt auf dem Blendrahmen befestigte Führungsschienen dürfen die Außenkante des Blendrahmens nicht überschreiten), Fensterlage gilt für Blendrahmen vollständig in der Dämmebene</p>
            </section>
          </div>
        </main>
        <key-figures></key-figures>
      </div>`;
  }
}
